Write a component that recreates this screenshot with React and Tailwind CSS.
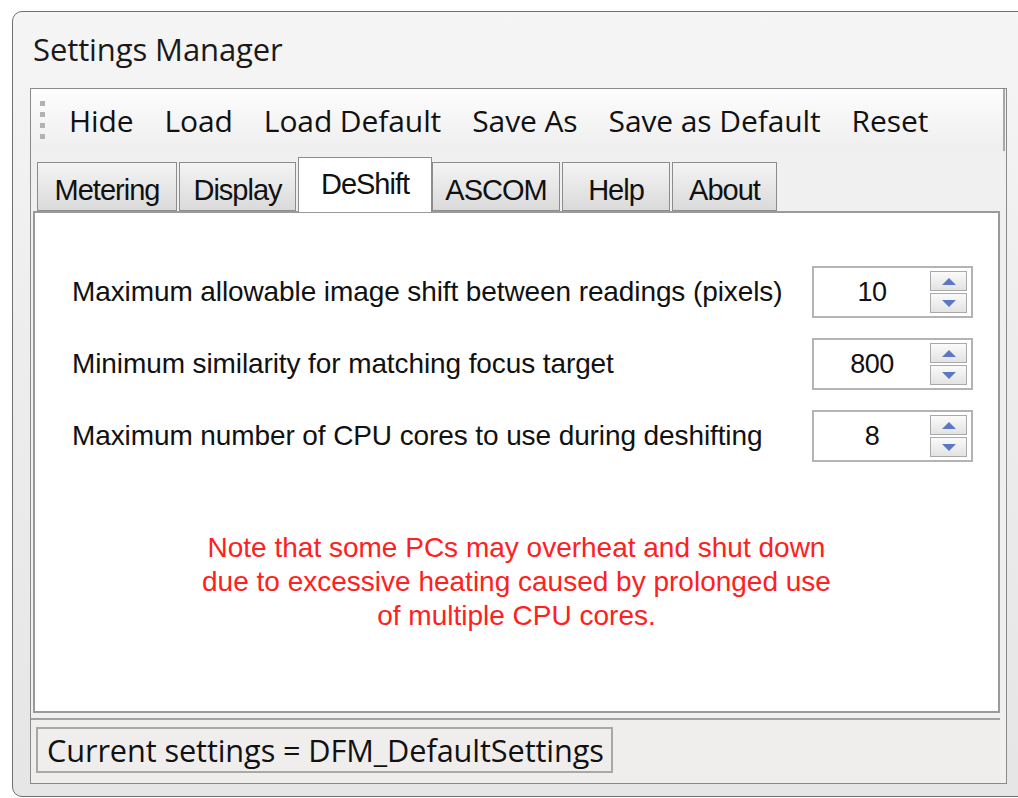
import React from 'react';

const menu = ['Hide', 'Load', 'Load Default', 'Save As', 'Save as Default', 'Reset'];

const tabs = [
  { name: 'Metering', w: 'w-[140px]' },
  { name: 'Display', w: 'w-[117px]' },
  { name: 'DeShift', w: 'w-[134px]', active: true },
  { name: 'ASCOM', w: 'w-[128px]' },
  { name: 'Help', w: 'w-[108px]' },
  { name: 'About', w: 'w-[105px]' },
];

const rows = [
  { label: 'Maximum allowable image shift between readings (pixels)', value: '10' },
  { label: 'Minimum similarity for matching focus target', value: '800' },
  { label: 'Maximum number of CPU cores to use during deshifting', value: '8' },
];

const ui = { fontFamily: '"Open Sans", "Noto Sans", sans-serif' };
const ms = { fontFamily: '"Liberation Sans", Arial, sans-serif' };

function Spinner({ value }) {
  return (
    <div className="w-[161px] h-[52px] border-2 border-[#b4b4b4] bg-white flex items-center">
      <div className="flex-1 text-center text-[27px] text-[#111] tracking-[-0.5px]" style={ms}>
        {value}
      </div>
      <div className="w-[37px] h-[42px] mr-[4px] flex flex-col gap-[2px]">
        <div className="flex-1 border border-[#a9a9a9] bg-gradient-to-b from-[#fafafa] to-[#e3e3e3] flex items-center justify-center">
          <svg width="14" height="7" viewBox="0 0 14 7">
            <path d="M7 0 L14 7 L0 7 Z" fill="#5a78c4" />
          </svg>
        </div>
        <div className="flex-1 border border-[#a9a9a9] bg-gradient-to-b from-[#fafafa] to-[#e3e3e3] flex items-center justify-center">
          <svg width="14" height="7" viewBox="0 0 14 7">
            <path d="M0 0 L14 0 L7 7 Z" fill="#5a78c4" />
          </svg>
        </div>
      </div>
    </div>
  );
}

export default function App() {
  return (
    <div className="w-[1018px] h-[798px] bg-white overflow-hidden pt-[11px] pl-[12px]">
      <div className="w-[1016px] h-[786px] rounded-[10px] border border-[#707070] bg-gradient-to-b from-[#f5f5f5] via-[#ececec] to-[#e6e6e6] flex flex-col">
        {/* title bar */}
        <div className="h-[76px] pl-[20px] pt-[14px] text-[31px] text-[#1a1a1a] tracking-[-0.1px]" style={ui}>
          Settings Manager
        </div>

        {/* client area */}
        <div className="ml-[17px] w-[977px] h-[696px] border border-[#8a8a8a] bg-[#f0f0f0] flex flex-col">
          {/* tool strip */}
          <div className="h-[62px] mr-[1px] border-r-2 border-[#a8a8a8] bg-gradient-to-b from-[#fdfdfd] to-[#eeeeee] flex items-center">
            <div className="ml-[9px] mr-[24px] flex flex-col gap-[6px]">
              {[0, 1, 2, 3].map(i => (
                <div key={i} className="w-[5px] h-[5px] bg-[#b2b2b2]" />
              ))}
            </div>
            <div className="flex gap-[31px] text-[30px] text-[#111] tracking-[-0.1px]" style={ui}>
              {menu.map(m => (
                <span key={m}>{m}</span>
              ))}
            </div>
          </div>

          {/* tabs */}
          <div className="mt-[6px] h-[54px] pl-[6px] flex items-end relative z-10">
            {tabs.map(t =>
              t.active ? (
                <div
                  key={t.name}
                  className={`${t.w} h-[55px] -mb-[1px] border border-b-0 border-[#8c8c8c] bg-white text-center pt-[5px] text-[29px] text-[#111] tracking-[-1px]`}
                  style={ms}
                >
                  {t.name}
                </div>
              ) : (
                <div
                  key={t.name}
                  className={`${t.w} h-[49px] mr-[2px] border border-[#8c8c8c] bg-gradient-to-b from-[#f4f4f4] to-[#dadada] text-center pt-[6px] text-[29px] text-[#111] tracking-[-1px]`}
                  style={ms}
                >
                  {t.name}
                </div>
              )
            )}
          </div>

          {/* tab page */}
          <div className="ml-[2px] mr-[6px] h-[502px] border-2 border-[#9a9a9a] bg-white flex flex-col pt-[53px]">
            <div className="flex flex-col gap-[20px] pl-[37px] pr-[25px]">
              {rows.map(r => (
                <div key={r.label} className="flex items-center justify-between">
                  <span className="text-[28px] text-[#111] tracking-[-0.1px]" style={ms}>
                    {r.label}
                  </span>
                  <Spinner value={r.value} />
                </div>
              ))}
            </div>
            <p
              className="mt-[69px] text-center text-[28px] leading-[34px] text-[#ff2020]"
              style={ms}
            >
              Note that some PCs may overheat and shut down
              <br />
              due to excessive heating caused by prolonged use
              <br />
              of multiple CPU cores.
            </p>
          </div>

          {/* status strip */}
          <div className="mt-[5px] mr-[6px] flex-1 border-t-2 border-[#a0a0a0] bg-[#f0eded] pl-[5px] pt-[7px]">
            <div
              className="w-[577px] h-[46px] border-2 border-[#a8a8a8] pl-[9px] text-[30.7px] leading-[42px] text-[#111] tracking-[-0.1px]"
              style={ui}
            >
              Current settings = DFM_DefaultSettings
            </div>
          </div>
        </div>
      </div>
    </div>
  );
}
